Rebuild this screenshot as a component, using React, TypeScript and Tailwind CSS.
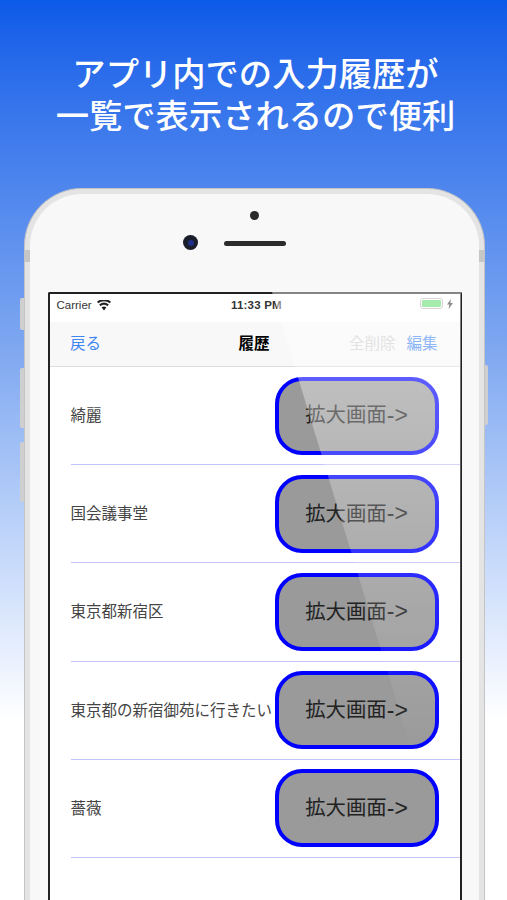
import React from 'react';

const jp = "font-['Liberation_Sans','Noto_Sans_CJK_JP',sans-serif]";

const rows = ['綺麗', '国会議事堂', '東京都新宿区', '東京都の新宿御苑に行きたい', '薔薇'];

function HistoryRow({ label }: { label: string }) {
  return (
    <div className="ml-[21px] h-[98.2px] shrink-0 flex items-center justify-between border-b border-[#c4c4fd] pr-[21px]">
      <span className="text-[15.5px] text-[#444] whitespace-nowrap">{label}</span>
      <button className="w-[164px] h-[78px] shrink-0 rounded-[27px] border-[4px] border-[#0000ff] bg-[#9a9a9a] text-[20.4px] leading-none text-[#222] flex items-center justify-center">
        拡大画面<span className="text-[23px] leading-none">-&gt;</span>
      </button>
    </div>
  );
}

function StatusBar() {
  return (
    <div className="h-[28px] bg-white flex items-start justify-between px-[7px] pt-[3px] text-[11.5px] text-[#333] relative">
      <div className="flex items-center gap-[5px]">
        <span>Carrier</span>
        <svg width="14" height="11" viewBox="0 0 14 11" fill="#222">
          <path d="M7 10.5 4.6 7.4a3.8 3.8 0 0 1 4.8 0zM3.6 6.2 2.2 4.4a7.6 7.6 0 0 1 9.6 0l-1.4 1.8a5.4 5.4 0 0 0-6.8 0zM1.3 3.3 0 1.7a10.8 10.8 0 0 1 14 0l-1.3 1.6a8.8 8.8 0 0 0-11.4 0z" />
        </svg>
      </div>
      <span className="absolute left-[181.5px] font-bold text-[#333] tracking-[0.2px]">11:33 PM</span>
      <div className="flex items-center gap-[3px] mt-[1px]">
        <div className="w-[23px] h-[11px] rounded-[3px] border border-[#b5b5b5] p-[1px] mr-[1px]">
          <div className="w-full h-full bg-[#5fdc6c] rounded-[1px]" />
        </div>
        <svg width="6" height="10" viewBox="0 0 6 10" fill="#333">
          <path d="M3.8 0 0 5.6h2.3L1.6 10 6 3.9H3.4z" />
        </svg>
      </div>
    </div>
  );
}

function NavBar() {
  return (
    <div className="h-[45px] bg-[#f8f8f8] border-b border-[#dcdcdc] flex items-center pl-[20.5px] pr-[22px] relative text-[15.5px]">
      <span className="text-[#3f85f2]">戻る</span>
      <span className="absolute left-[189px] font-bold text-black">履歴</span>
      <span className="ml-auto text-[#cfcfcf]">全削除</span>
      <span className="ml-[11px] text-[#3f85f2]">編集</span>
    </div>
  );
}

export default function App() {
  return (
    <div className={`${jp} relative w-[507px] h-[900px] overflow-hidden bg-gradient-to-b from-[#0b5ae8] via-[#7da6f0] via-38% to-white to-80%`}>
      <h1 className="pt-[54px] pl-[4px] h-[188px] text-center text-white font-medium text-[33.3px] leading-[42px] whitespace-nowrap">
        アプリ内での入力履歴が
        <br />
        一覧で表示されるので便利
      </h1>

      {/* side buttons */}
      <div className="absolute left-[20px] top-[298px] w-[4px] h-[32px] bg-[#cfcfcf] rounded-l-[2px]" />
      <div className="absolute left-[20px] top-[368px] w-[4px] h-[60px] bg-[#cfcfcf] rounded-l-[2px]" />
      <div className="absolute left-[20px] top-[442px] w-[4px] h-[60px] bg-[#cfcfcf] rounded-l-[2px]" />
      <div className="absolute left-[485px] top-[365px] w-[3px] h-[60px] bg-[#cfcfcf] rounded-r-[2px]" />

      {/* phone body */}
      <div className="relative ml-[24px] w-[461px] h-[760px] rounded-t-[58px] bg-[#e4e4e4] border-[1.5px] border-b-0 border-[#c4c4c4] pt-[5px] px-[5px]">
        <div className="absolute left-0 top-[61px] w-[6px] h-[12px] bg-[#c6c6c6]" />
        <div className="absolute right-0 top-[61px] w-[6px] h-[12px] bg-[#c6c6c6]" />
        <div className="h-full rounded-t-[52px] bg-[#f8f8f8] px-[17.5px] pt-[98px] relative">
          <div className="absolute left-[220px] top-[17px] w-[9px] h-[9px] rounded-full bg-[#2a2a2a]" />
          <div className="absolute left-[153px] top-[41px] w-[15px] h-[15px] rounded-full bg-[#1a1d2a] flex items-center justify-center">
            <div className="w-[6px] h-[6px] rounded-full bg-[#1d2f8a]" />
          </div>
          <div className="absolute left-[194px] top-[47px] w-[62px] h-[5px] rounded-full bg-[#2c2c2c]" />

          {/* screen */}
          <div className="h-[620px] border-[2.5px] border-b-0 border-[#222] bg-white flex flex-col rounded-t-[2px]">
            <StatusBar />
            <NavBar />
            {rows.map((r) => (
              <HistoryRow key={r} label={r} />
            ))}
          </div>
        </div>
      </div>

      {/* glass reflection, fades out toward the lower rows */}
      <div className="absolute left-0 top-[292px] w-[507px] h-[460px] bg-gradient-to-b from-white/45 to-transparent [clip-path:polygon(272px_0,461px_0,461px_460px,412px_460px)]" />
    </div>
  );
}
